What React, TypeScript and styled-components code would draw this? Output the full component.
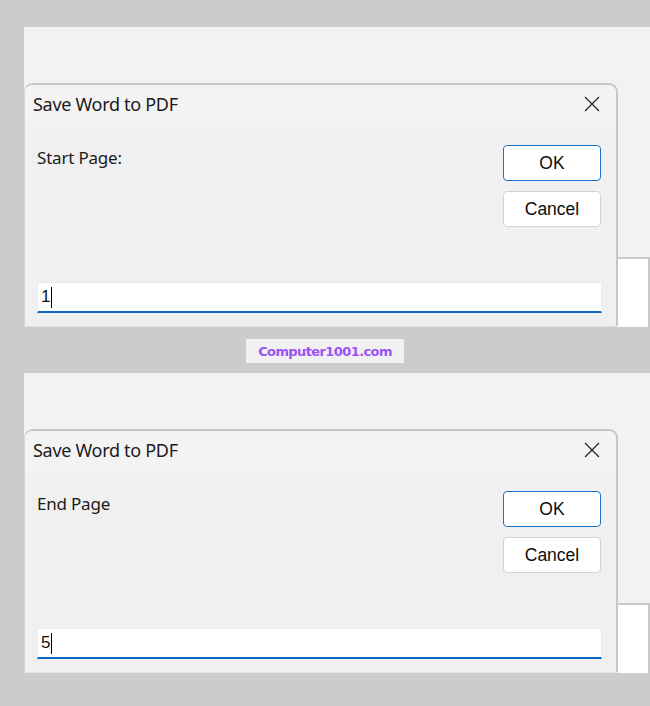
import React from "react";
import styled, { createGlobalStyle } from "styled-components";

const Global = createGlobalStyle`
  html, body { margin: 0; padding: 0; background: #cccccc; }
  body { width: 650px; height: 706px; overflow: hidden; }
`;

const Page = styled.div`
  display: flex;
  flex-direction: column;
  padding-top: 27px;
`;

const Window = styled.div`
  margin-left: 24px;
  height: 300px;
  background: #f2f2f2;
  display: flex;
  flex-direction: column;
`;

const WindowTop = styled.div`
  height: 56px;
  flex: none;
`;

const WindowRow = styled.div`
  flex: 1;
  display: flex;
  min-height: 0;
`;

const Dialog = styled.div`
  width: 594px;
  flex: none;
  box-sizing: border-box;
  border: 2px solid #c6c6c6;
  border-bottom: 1px solid #e2e2e2;
  border-left: 1px solid #d6d6d6;
  border-radius: 9px 9px 3px 0;
  background: #f0f0f0;
  display: flex;
  flex-direction: column;
  overflow: hidden;
`;

const TitleBar = styled.div`
  height: 42px;
  flex: none;
  box-sizing: border-box;
  background: #f3f3f3;
  display: flex;
  align-items: center;
  justify-content: space-between;
  padding: 0 16px 4px 8px;
`;

const Title = styled.span`
  font-family: "Noto Sans", "Open Sans", sans-serif;
  font-size: 18px;
  color: #1b1b1b;
  letter-spacing: -0.3px;
`;

const CloseIcon = styled.svg`
  width: 16px;
  height: 16px;
  display: block;
`;

const Body = styled.div`
  flex: 1;
  display: flex;
  flex-direction: column;
  padding: 18px 15px 13px 12px;
`;

const TopRow = styled.div`
  display: flex;
  justify-content: space-between;
  align-items: flex-start;
`;

const Label = styled.span`
  font-family: "Noto Sans", "Open Sans", sans-serif;
  font-size: 17px;
  color: #1b1b1b;
  letter-spacing: -0.2px;
  margin-top: 1px;
`;

const Buttons = styled.div`
  display: flex;
  flex-direction: column;
  gap: 10px;
`;

const Button = styled.div<{ $primary?: boolean }>`
  width: 98px;
  height: 36px;
  box-sizing: border-box;
  border: 1px solid ${(p) => (p.$primary ? "#1a73c8" : "#d3d3d3")};
  border-radius: 4px;
  background: #ffffff;
  display: flex;
  align-items: center;
  justify-content: center;
  font-family: "Liberation Sans", Arial, sans-serif;
  font-size: 17.5px;
  color: #0c0c0c;
`;

const Field = styled.div`
  margin-top: auto;
  margin-right: -1px;
  height: 31px;
  box-sizing: border-box;
  background: #ffffff;
  border: 1px solid #ececec;
  border-bottom: 2px solid #0a67c2;
  display: flex;
  align-items: center;
  padding-left: 3px;
  font-family: "Liberation Sans", Arial, sans-serif;
  font-size: 17px;
  color: #111;
`;

const Caret = styled.span`
  display: inline-block;
  width: 1px;
  height: 21px;
  background: #000;
  margin-left: 1px;
`;

const Side = styled.div`
  flex: 1;
  display: flex;
  flex-direction: column;
  justify-content: flex-end;
`;

const SideSheet = styled.div`
  height: 70px;
  box-sizing: border-box;
  background: #ffffff;
  border-top: 2px solid #c8c8c8;
  border-right: 2px solid #c8c8c8;
`;

const MarkRow = styled.div`
  height: 46px;
  display: flex;
  justify-content: center;
  align-items: flex-start;
  padding-top: 12px;
  box-sizing: border-box;
`;

const Mark = styled.div`
  width: 158px;
  height: 24px;
  background: #f1f1f1;
  display: flex;
  align-items: center;
  justify-content: center;
  font-family: "DejaVu Sans", Verdana, sans-serif;
  font-weight: bold;
  font-size: 13px;
  letter-spacing: -0.6px;
  color: #9b52f7;
`;

function SaveDialog({ label, value }: { label: string; value: string }) {
  return (
    <Window>
      <WindowTop />
      <WindowRow>
        <Dialog>
          <TitleBar>
            <Title>Save Word to PDF</Title>
            <CloseIcon viewBox="0 0 16 16">
              <path d="M1 1 L15 15 M15 1 L1 15" stroke="#222" strokeWidth="1.2" fill="none" />
            </CloseIcon>
          </TitleBar>
          <Body>
            <TopRow>
              <Label>{label}</Label>
              <Buttons>
                <Button $primary>OK</Button>
                <Button>Cancel</Button>
              </Buttons>
            </TopRow>
            <Field>
              {value}
              <Caret />
            </Field>
          </Body>
        </Dialog>
        <Side>
          <SideSheet />
        </Side>
      </WindowRow>
    </Window>
  );
}

export default function App() {
  return (
    <>
      <Global />
      <Page>
        <SaveDialog label="Start Page:" value="1" />
        <MarkRow>
          <Mark>Computer1001.com</Mark>
        </MarkRow>
        <SaveDialog label="End Page" value="5" />
      </Page>
    </>
  );
}
